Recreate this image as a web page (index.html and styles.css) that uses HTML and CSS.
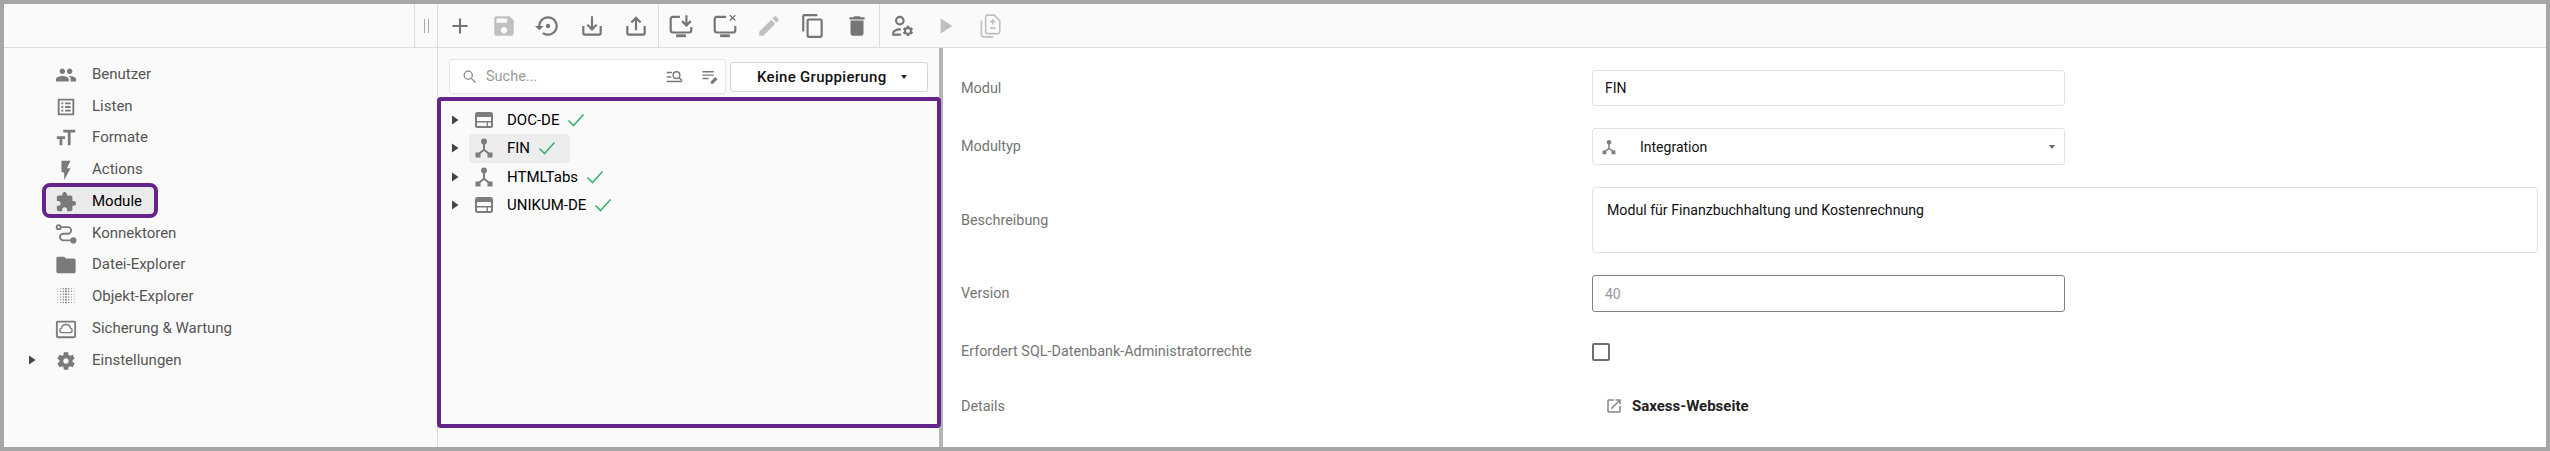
FILE: index.html
```html
<!DOCTYPE html>
<html lang="de">
<head>
  <meta charset="UTF-8" />
  <meta name="viewport" content="width=device-width, initial-scale=1.0" />
  <title>Module</title>
  <link rel="stylesheet" href="styles.css">
</head>
<body>
  <svg class="sprite">
    <symbol id="arrow" viewBox="0 0 12 12"><path d="M3 1.500v9l6.500-4.500z"/></symbol>
    <symbol id="check" viewBox="0 0 18 14"><path d="M1.500 7.500l5 5L16.500 1.500" fill="none" stroke="#3cb371" stroke-width="1.600"/></symbol>
    <symbol id="table" viewBox="0 0 24 24"><rect x="4" y="5" width="16" height="14" rx="1.500" fill="none" stroke="currentColor" stroke-width="2"/><path d="M4 5h16v4H4zM4 13h16v1.400H4zM14.600 13H16v6h-1.400z"/></symbol>
    <symbol id="hub" viewBox="0 0 24 24"><circle cx="12" cy="5.500" r="3"/><path d="M11 7h2v6.200l5 4-1.200 1.600-4.800-3.800-4.800 3.800L6 17.200l5-4z"/><path d="M3.500 16.500h5v5h-5zM15.500 16.500h5v5h-5z"/></symbol>
  </svg>

  <div class="window">
    <div class="toolbar">
      <div class="tool-spacer"></div>
      <div class="tool-grip"><span></span></div>
      <div class="tool-group">
        <span class="tool"><svg viewBox="0 0 24 24"><path d="M19 13h-6v6h-2v-6H5v-2h6V5h2v6h6v2z"/></svg></span>
        <span class="tool off"><svg viewBox="0 0 24 24"><path d="M17 3H5c-1.110 0-2 .9-2 2v14c0 1.100.89 2 2 2h14c1.100 0 2-.9 2-2V7l-4-4zm-5 16c-1.660 0-3-1.340-3-3s1.340-3 3-3 3 1.340 3 3-1.340 3-3 3zm3-10H5V5h10v4z"/></svg></span>
        <span class="tool"><svg viewBox="0 0 24 24"><path d="M14 12c0-1.100-.9-2-2-2s-2 .9-2 2 .9 2 2 2 2-.9 2-2zm-2-9c-4.970 0-9 4.030-9 9H0l4 4 4-4H5c0-3.870 3.130-7 7-7s7 3.130 7 7-3.130 7-7 7c-1.510 0-2.910-.49-4.060-1.300l-1.420 1.440C8.040 20.300 9.940 21 12 21c4.970 0 9-4.030 9-9s-4.030-9-9-9z"/></svg></span>
        <span class="tool"><svg viewBox="0 0 24 24"><path d="M19 12v7H5v-7H3v7c0 1.100.9 2 2 2h14c1.100 0 2-.9 2-2v-7h-2zm-6 .67l2.590-2.580L17 11.500l-5 5-5-5 1.410-1.410L11 12.670V3h2z"/></svg></span>
        <span class="tool"><svg viewBox="0 0 24 24"><path d="M19 12v7H5v-7H3v7c0 1.100.9 2 2 2h14c1.100 0 2-.9 2-2v-7h-2zM11 6.830L8.410 9.410 7 8l5-5 5 5-1.410 1.410L13 6.830V16h-2z"/></svg></span>
      </div>
      <div class="tool-group">
        <span class="tool"><svg viewBox="0 0 24 24" fill="none" stroke="currentColor" stroke-width="2"><path d="M11 3.500H4.500a2 2 0 0 0-2 2V16a2 2 0 0 0 2 2h15a2 2 0 0 0 2-2v-3"/><path d="M7.500 21h9" stroke-width="2.600"/><path d="M17 2v9M13 7.500l4 4 4-4"/></svg></span>
        <span class="tool"><svg viewBox="0 0 24 24" fill="none" stroke="currentColor" stroke-width="2"><path d="M13 3.500H4.500a2 2 0 0 0-2 2V16a2 2 0 0 0 2 2h15a2 2 0 0 0 2-2v-4"/><path d="M7.500 21h9" stroke-width="2.600"/><path d="M16.500 2l5 5M21.500 2l-5 5" stroke-width="1.200"/></svg></span>
        <span class="tool off"><svg viewBox="0 0 24 24"><path d="M3 17.250V21h3.750L17.810 9.940l-3.750-3.750L3 17.250zM20.710 7.040c.39-.39.39-1.020 0-1.410l-2.340-2.340c-.39-.39-1.020-.39-1.410 0l-1.830 1.830 3.750 3.750 1.830-1.830z"/></svg></span>
        <span class="tool"><svg viewBox="0 0 24 24"><path d="M16 1H4c-1.100 0-2 .9-2 2v14h2V3h12V1zm3 4H8c-1.100 0-2 .9-2 2v14c0 1.100.9 2 2 2h11c1.100 0 2-.9 2-2V7c0-1.100-.9-2-2-2zm0 16H8V7h11v14z"/></svg></span>
        <span class="tool"><svg viewBox="0 0 24 24"><path d="M6 19c0 1.100.9 2 2 2h8c1.100 0 2-.9 2-2V7H6v12zM19 4h-3.500l-1-1h-5l-1 1H5v2h14V4z"/></svg></span>
      </div>
      <div class="tool-group last">
        <span class="tool"><svg viewBox="0 0 24 24"><path d="M10 2.500a4.500 4.500 0 1 1 0 9 4.500 4.500 0 0 1 0-9zm0 2a2.500 2.500 0 1 0 0 5 2.500 2.500 0 0 0 0-5zM3 21v-2.500c0-2.800 4-4.500 8-4.300v2c-3-.2-6 1-6 2.300v.5h6v2z"/><path transform="translate(11.500 10.500) scale(.5)" d="M19.140 12.940c.04-.3.06-.61.06-.94 0-.32-.02-.64-.07-.94l2.030-1.580c.18-.14.23-.41.12-.61l-1.920-3.320c-.12-.22-.37-.29-.59-.22l-2.390.96c-.5-.38-1.030-.7-1.620-.94l-.36-2.540c-.04-.24-.24-.41-.48-.41h-3.840c-.24 0-.43.17-.47.41l-.36 2.540c-.59.24-1.130.57-1.620.94l-2.390-.96c-.22-.08-.47 0-.59.22L2.740 8.870c-.12.21-.08.47.12.61l2.030 1.580c-.05.3-.09.63-.09.94s.02.64.07.94l-2.030 1.580c-.18.14-.23.41-.12.61l1.920 3.320c.12.22.37.29.59.22l2.390-.96c.5.38 1.030.7 1.620.94l.36 2.540c.05.24.24.41.48.41h3.840c.24 0 .44-.17.47-.41l.36-2.540c.59-.24 1.130-.56 1.620-.94l2.390.96c.22.08.47 0 .59-.22l1.920-3.320c.12-.22.07-.47-.12-.61l-2.010-1.580zM12 15.600c-1.980 0-3.600-1.620-3.600-3.600s1.620-3.600 3.600-3.600 3.600 1.620 3.600 3.600-1.620 3.600-3.600 3.600z"/></svg></span>
        <span class="tool off"><svg viewBox="0 0 24 24"><path d="M7 5v14l11-7z"/></svg></span>
        <span class="tool off"><svg viewBox="0 0 24 24" fill="none" stroke="currentColor" stroke-width="1.500"><path d="M4 7v12.500A2.500 2.500 0 0 0 6.500 22H15"/><path d="M10 2h6l5 5v10.500a1.500 1.500 0 0 1-1.500 1.500h-9.500A2 2 0 0 1 8 17V4a2 2 0 0 1 2-2z"/><path d="M14.500 5.500v5M12 8h5M12 14h5"/></svg></span>
      </div>
    </div>

    <div class="main">
      <nav class="sidebar">
        <div class="nav-row"><span class="nav-arrow"></span><div class="nav-body"><svg class="nav-ico" viewBox="0 0 24 24"><path d="M16 11c1.660 0 2.990-1.340 2.990-3S17.660 5 16 5c-1.660 0-3 1.340-3 3s1.340 3 3 3zm-8 0c1.660 0 2.990-1.340 2.990-3S9.660 5 8 5C6.340 5 5 6.340 5 8s1.340 3 3 3zm0 2c-2.330 0-7 1.170-7 3.500V19h14v-2.500c0-2.330-4.670-3.500-7-3.500zm8 0c-.29 0-.62.02-.97.05 1.160.84 1.970 1.970 1.970 3.450V19h6v-2.500c0-2.330-4.670-3.500-7-3.500z"/></svg>Benutzer</div></div>
        <div class="nav-row"><span class="nav-arrow"></span><div class="nav-body"><svg class="nav-ico" viewBox="0 0 24 24"><path d="M19 5v14H5V5h14m1.100-2H3.900c-.5 0-.9.4-.9.9v16.200c0 .4.4.9.9.9h16.200c.4 0 .9-.5.9-.9V3.900c0-.5-.5-.9-.9-.9zM11 7h6v2h-6V7zm0 4h6v2h-6v-2zm0 4h6v2h-6zM7 7h2v2H7zm0 4h2v2H7zm0 4h2v2H7z"/></svg>Listen</div></div>
        <div class="nav-row"><span class="nav-arrow"></span><div class="nav-body"><svg class="nav-ico" viewBox="0 0 24 24"><path d="M9 3v3h5v14h3V6h5V3H9zM2 10v3h3v7h3v-7h3v-3H2z"/></svg>Formate</div></div>
        <div class="nav-row"><span class="nav-arrow"></span><div class="nav-body"><svg class="nav-ico" viewBox="0 0 24 24"><path d="M7 2v12l3 1v8l7-13h-4l4-8z"/></svg>Actions</div></div>
        <div class="nav-row"><span class="nav-arrow"></span><div class="nav-body active"><svg class="nav-ico" viewBox="0 0 24 24"><path d="M20.500 11H19V7c0-1.100-.9-2-2-2h-4V3.500C13 2.120 11.880 1 10.500 1S8 2.120 8 3.500V5H4c-1.100 0-1.990.9-1.990 2v3.800H3.500c1.490 0 2.700 1.210 2.700 2.700s-1.210 2.700-2.700 2.700H2V20c0 1.100.9 2 2 2h3.800v-1.500c0-1.490 1.210-2.700 2.700-2.700 1.490 0 2.700 1.210 2.700 2.700V22H17c1.100 0 2-.9 2-2v-4h1.500c1.380 0 2.500-1.120 2.500-2.500S21.880 11 20.500 11z"/></svg>Module</div></div>
        <div class="nav-row"><span class="nav-arrow"></span><div class="nav-body"><svg class="nav-ico" viewBox="0 0 24 24" fill="none" stroke="currentColor" stroke-width="2"><circle cx="4" cy="4.500" r="2.200"/><path d="M6 4.500h8a3.600 3.600 0 0 1 0 7.200H9a3.600 3.600 0 0 0 0 7.200h9"/><circle cx="20" cy="19" r="2.400" fill="currentColor"/></svg>Konnektoren</div></div>
        <div class="nav-row"><span class="nav-arrow"></span><div class="nav-body"><svg class="nav-ico" viewBox="0 0 24 24"><path d="M10 3H3.500C2.400 3 1.500 3.900 1.500 5L1.500 19c0 1.100.9 2 2 2h17c1.100 0 2-.9 2-2V7c0-1.100-.9-2-2-2H12l-2-2z"/></svg>Datei-Explorer</div></div>
        <div class="nav-row"><span class="nav-arrow"></span><div class="nav-body"><svg class="nav-ico" viewBox="0 0 24 24" fill="none" stroke="currentColor" stroke-linecap="round" stroke-dasharray="0 3"><path d="M3 3v18" stroke-width=".8"/><path d="M6 3v18" stroke-width="1.200"/><path d="M9 3v18" stroke-width="1.600"/><path d="M12 3v18" stroke-width="2"/><path d="M15 3v18" stroke-width="1.600"/><path d="M18 3v18" stroke-width="1.200"/><path d="M21 3v18" stroke-width=".8"/></svg>Objekt-Explorer</div></div>
        <div class="nav-row"><span class="nav-arrow"></span><div class="nav-body"><svg class="nav-ico" viewBox="0 0 24 24" fill="none" stroke="currentColor" stroke-width="2"><rect x="2" y="4" width="20" height="17" rx="1"/><path d="M7.500 16a2.500 2.500 0 0 1-.4-4.900 5 5 0 0 1 9.800 0 2.500 2.500 0 0 1-.4 4.900z" stroke-width="1.500"/></svg>Sicherung &amp; Wartung</div></div>
        <div class="nav-row"><svg class="nav-arrow" viewBox="0 0 12 12"><use href="#arrow"/></svg><div class="nav-body"><svg class="nav-ico" viewBox="0 0 24 24"><path d="M19.140 12.940c.04-.3.06-.61.06-.94 0-.32-.02-.64-.07-.94l2.030-1.580c.18-.14.23-.41.12-.61l-1.920-3.320c-.12-.22-.37-.29-.59-.22l-2.390.96c-.5-.38-1.030-.7-1.620-.94l-.36-2.540c-.04-.24-.24-.41-.48-.41h-3.840c-.24 0-.43.17-.47.41l-.36 2.540c-.59.24-1.130.57-1.620.94l-2.390-.96c-.22-.08-.47 0-.59.22L2.740 8.870c-.12.21-.08.47.12.61l2.030 1.580c-.05.3-.09.63-.09.94s.02.64.07.94l-2.030 1.580c-.18.14-.23.41-.12.61l1.920 3.320c.12.22.37.29.59.22l2.390-.96c.5.38 1.030.7 1.620.94l.36 2.540c.05.24.24.41.48.41h3.840c.24 0 .44-.17.47-.41l.36-2.540c.59-.24 1.130-.56 1.620-.94l2.390.96c.22.08.47 0 .59-.22l1.920-3.320c.12-.22.07-.47-.12-.61l-2.010-1.580zM12 15c-1.650 0-3-1.350-3-3s1.350-3 3-3 3 1.350 3 3-1.350 3-3 3z"/></svg>Einstellungen</div></div>
      </nav>

      <section class="middle">
        <div class="search-row">
          <div class="search">
            <svg class="search-ico" viewBox="0 0 24 24" fill="none" stroke="currentColor" stroke-width="2"><circle cx="10" cy="10" r="6.500"/><path d="M15 15l6.500 6.500"/></svg>
            <span class="search-text">Suche...</span>
            <svg class="search-tool first" viewBox="0 0 24 24" fill="none" stroke="currentColor" stroke-width="1.800"><path d="M1 6h7M1 12h6M1 18h20"/><circle cx="14" cy="9.500" r="4.500"/><path d="M17.500 13l4 4"/></svg>
            <svg class="search-tool" viewBox="0 0 24 24" fill="none" stroke="currentColor" stroke-width="1.800"><path d="M2 5h15M2 9.500h15M2 14h8"/><path d="M13 21l0-3 6-6 3 3-6 6z" fill="currentColor" stroke="none"/></svg>
          </div>
          <div class="group-btn">Keine Gruppierung<span class="caret"></span></div>
        </div>
        <div class="tree">
          <div class="tree-row"><svg class="tree-arrow"><use href="#arrow"/></svg><div class="tree-body"><svg class="tree-ico"><use href="#table"/></svg>DOC-DE<svg class="tree-check"><use href="#check"/></svg></div></div>
          <div class="tree-row"><svg class="tree-arrow"><use href="#arrow"/></svg><div class="tree-body active"><svg class="tree-ico"><use href="#hub"/></svg>FIN<svg class="tree-check"><use href="#check"/></svg></div></div>
          <div class="tree-row"><svg class="tree-arrow"><use href="#arrow"/></svg><div class="tree-body"><svg class="tree-ico"><use href="#hub"/></svg>HTMLTabs<svg class="tree-check"><use href="#check"/></svg></div></div>
          <div class="tree-row"><svg class="tree-arrow"><use href="#arrow"/></svg><div class="tree-body"><svg class="tree-ico"><use href="#table"/></svg>UNIKUM-DE<svg class="tree-check"><use href="#check"/></svg></div></div>
        </div>
      </section>

      <section class="form">
        <div class="label">Modul</div>
        <div class="field">FIN</div>
        <div class="label row-start">Modultyp</div>
        <div class="field select"><svg class="select-ico"><use href="#hub"/></svg>Integration<span class="caret small"></span></div>
        <div class="label row-start">Beschreibung</div>
        <div class="field area">Modul für Finanzbuchhaltung und Kostenrechnung</div>
        <div class="label row-start">Version</div>
        <div class="field readonly">40</div>
        <div class="label row-start">Erfordert SQL-Datenbank-Administratorrechte</div>
        <div class="checkbox"></div>
        <div class="label row-start">Details</div>
        <div class="details"><svg class="details-ico" viewBox="0 0 24 24"><path d="M19 19H5V5h7V3H5c-1.110 0-2 .9-2 2v14c0 1.100.89 2 2 2h14c1.100 0 2-.9 2-2v-7h-2v7zM14 3v2h3.590l-9.830 9.830 1.410 1.410L19 6.410V10h2V3h-7z"/></svg>Saxess-Webseite</div>
      </section>
    </div>
  </div>
</body>
</html>
```

FILE: styles.css
```css
* {
  box-sizing: border-box;
}
html, body {
  margin: 0;
  height: 100%;
}
body {
  font-family: Roboto, "Liberation Sans", sans-serif;
  font-size: 15px;
  color: #111;
  overflow: hidden;
}
svg {
  flex: none;
}
svg:not([fill]) {
  fill: currentColor;
}
.sprite {
  display: none;
}
.window {
  height: 451px;
  border: 4px solid #a6a6a6;
  background: #fafafa;
  display: flex;
  flex-direction: column;
}

/* toolbar */
.toolbar {
  height: 44px;
  flex: none;
  display: flex;
  border-bottom: 1px solid #ddd;
}
.tool-spacer {
  width: 411px;
  border-right: 1px solid #ddd;
}
.tool-grip {
  width: 23px;
  border-right: 1px solid #ddd;
  display: flex;
  justify-content: center;
  align-items: center;
}
.tool-grip span {
  width: 5px;
  height: 14px;
  border-left: 1px solid #aaa;
  border-right: 1px solid #aaa;
}
.tool-group {
  display: flex;
  border-right: 1px solid #ddd;
}
.tool-group.last {
  border-right: none;
}
.tool {
  width: 44px;
  display: flex;
  align-items: center;
  justify-content: center;
  color: #757575;
}
.tool.off {
  color: #c0c0c0;
}
.tool svg {
  width: 26px;
  height: 26px;
}

.main {
  flex: 1;
  display: flex;
  min-height: 0;
}

/* left navigation */
.sidebar {
  width: 434px;
  flex: none;
  padding-top: 10px;
  border-right: 1px solid #ddd;
  color: #555;
}
.nav-row {
  height: 31.75px;
  padding-left: 22px;
  display: flex;
  align-items: center;
}
.nav-arrow {
  width: 12px;
  height: 12px;
  flex: none;
  color: #444;
}
.nav-body {
  height: 27px;
  margin-left: 8px;
  padding: 0 10px 0 8px;
  display: flex;
  align-items: center;
  gap: 14px;
}
.nav-body.active {
  width: 108px;
  background: #ebebeb;
  color: #000;
  border-radius: 4px;
  outline: 4px solid #64248c;
}
.nav-ico {
  width: 22px;
  height: 22px;
  margin: 2px 1px 0;
  color: #7a7a7a;
}

/* middle column */
.middle {
  width: 505px;
  flex: none;
  border-right: 4px solid #b5b5b5;
}
.search-row {
  height: 49px;
  padding: 11px 0 0 11px;
  display: flex;
  align-items: flex-start;
  gap: 4px;
}
.search {
  width: 277px;
  height: 35px;
  background: #fff;
  border: 1px solid #e6e6e6;
  border-radius: 3px;
  padding-left: 12px;
  display: flex;
  align-items: center;
  color: #888;
}
.search-ico {
  width: 15px;
  height: 15px;
}
.search-text {
  margin-left: 9px;
  font-size: 14.5px;
  color: #999;
}
.search-tool {
  width: 18px;
  height: 18px;
  margin-left: 17px;
  color: #777;
}
.search-tool.first {
  margin-left: auto;
}
.search-tool:last-child {
  margin-right: 6px;
}
.group-btn {
  width: 198px;
  height: 30px;
  margin-top: 3px;
  background: #fff;
  border: 1px solid #d5d5d5;
  border-radius: 3px;
  padding: 0 20px 0 26px;
  display: flex;
  align-items: center;
  justify-content: space-between;
  font-weight: 500;
  font-size: 15px;
  letter-spacing: .3px;
  color: #111;
}
.caret {
  width: 0;
  height: 0;
  border-left: 3.5px solid transparent;
  border-right: 3.5px solid transparent;
  border-top: 4px solid #222;
}
.caret.small {
  margin-left: auto;
  margin-right: 9px;
  border-top-color: #666;
}
.tree {
  width: 504px;
  height: 331px;
  margin-left: -1px;
  padding: 5px 0 0 8px;
  border: 4px solid #64248c;
  border-radius: 4px;
  background: #fafafa;
}
.tree-row {
  height: 28.25px;
  display: flex;
  align-items: center;
}
.tree-arrow {
  width: 12px;
  height: 12px;
  color: #444;
}
.tree-body {
  height: 29px;
  margin-left: 8px;
  padding: 0 14px 0 3px;
  display: flex;
  align-items: center;
  color: #000;
  border-radius: 4px;
}
.tree-body.active {
  background: #ededed;
}
.tree-ico {
  width: 24px;
  height: 24px;
  margin-right: 11px;
  color: #7d7d7d;
}
.tree-check {
  width: 18px;
  height: 14px;
  margin-left: 8px;
}

/* detail form */
.form {
  flex: 1;
  background: #fff;
  padding: 22px 8px 0 18px;
  display: grid;
  grid-template-columns: 631px 473px 1fr;
  grid-template-rows: 36px 37px 66px 37px 35px 30px;
  row-gap: 22px;
  align-content: start;
  align-items: center;
  font-size: 14px;
}
.label {
  grid-column: 1;
  color: #757575;
  font-size: 14.4px;
}
.field {
  height: 100%;
  border: 1px solid #e2e2e2;
  border-radius: 3px;
  padding-left: 12px;
  display: flex;
  align-items: center;
  color: #111;
}
.field.select {
  padding-left: 7px;
}
.select-ico {
  width: 18px;
  height: 18px;
  margin-right: 22px;
  color: #7d7d7d;
}
.field.area {
  grid-column: 2 / 4;
  align-items: flex-start;
  padding: 14px 0 0 14px;
  font-size: 14.15px;
}
.field.readonly {
  border-color: #808080;
  color: #999;
}
.checkbox {
  width: 18px;
  height: 18px;
  border: 2px solid #6e6e6e;
  border-radius: 2px;
}
.details {
  padding-left: 13px;
  display: flex;
  align-items: center;
  gap: 9px;
  font-size: 15px;
  font-weight: 700;
  color: #222;
}
.details-ico {
  width: 18px;
  height: 18px;
  color: #888;
}
```
